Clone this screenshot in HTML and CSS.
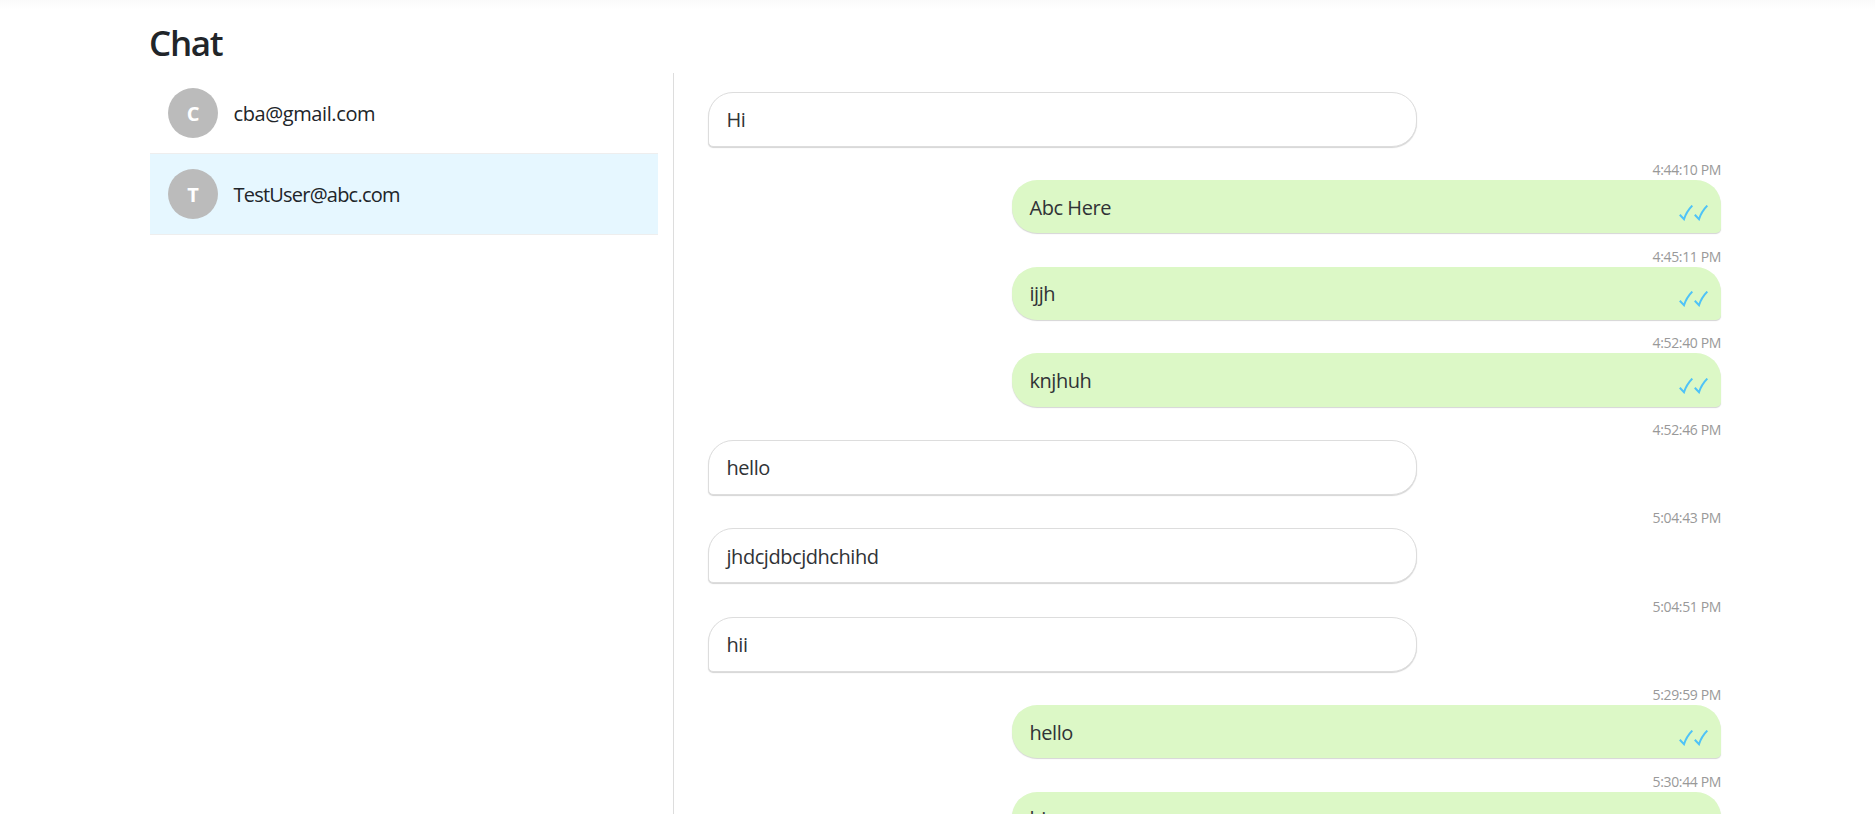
FILE: index.html
```html
<!DOCTYPE html>
<html lang="en">
<head>
<meta charset="utf-8">
<title>Chat</title>
<link rel="stylesheet" href="styles.css">
</head>
<body>
<svg class="defs" width="0" height="0"><symbol id="ticks" viewBox="0 0 30 16"><path d="M.8 9.800 5 14.200C6.500 9.500 9.500 4.500 13.300.6M15.800 9.800 20 14.200C21.500 9.500 24.500 4.500 28.300.6" fill="none" stroke="#4fc3f7" stroke-width="2"/></symbol></svg>
<div class="topbar"></div>
<main class="page">
  <h1 class="title">Chat</h1>
  <div class="columns">
    <aside class="users">
      <div class="user"><span class="avatar">C</span><span class="email">cba@gmail.com</span></div>
      <div class="user active"><span class="avatar">T</span><span class="email">TestUser@abc.com</span></div>
    </aside>
    <section class="messages">
      <div class="message"><div class="bubble">Hi</div><time class="time">4:44:10 PM</time></div>
      <div class="message sent"><div class="bubble"><span>Abc Here</span><svg class="ticks"><use href="#ticks"/></svg></div><time class="time">4:45:11 PM</time></div>
      <div class="message sent"><div class="bubble"><span>ijjh</span><svg class="ticks"><use href="#ticks"/></svg></div><time class="time">4:52:40 PM</time></div>
      <div class="message sent"><div class="bubble"><span>knjhuh</span><svg class="ticks"><use href="#ticks"/></svg></div><time class="time">4:52:46 PM</time></div>
      <div class="message"><div class="bubble">hello</div><time class="time">5:04:43 PM</time></div>
      <div class="message"><div class="bubble">jhdcjdbcjdhchihd</div><time class="time">5:04:51 PM</time></div>
      <div class="message"><div class="bubble">hii</div><time class="time">5:29:59 PM</time></div>
      <div class="message sent"><div class="bubble"><span>hello</span><svg class="ticks"><use href="#ticks"/></svg></div><time class="time">5:30:44 PM</time></div>
      <div class="message sent"><div class="bubble"><span>hi</span><svg class="ticks"><use href="#ticks"/></svg></div></div>
    </section>
  </div>
</main>
</body>
</html>
```
FILE: styles.css
```css
* { box-sizing: border-box; }
body {
  margin: 0;
  height: 814px;
  overflow: hidden;
  background: #fff;
  color: #212529;
  font: 20px/30px "Open Sans", "Noto Sans", sans-serif;
}
.defs { display: block; }
.topbar { height: 10px; background: linear-gradient(#fafafa, #fff); }
.page { width: 1575px; margin: 0 auto; padding-top: 13px; }
.title { margin: 0 0 10px -1px; font-size: 35px; line-height: 40px; font-weight: 600; letter-spacing: -1.3px; }
.columns { display: flex; height: 741px; overflow: hidden; }
.users { width: 508px; margin-right: 15px; }
.user {
  display: flex;
  align-items: center;
  height: 80px;
  padding: 0 18px;
}
.user.active { height: 82px; background: #e6f7ff; border: solid #eee; border-width: 1px 0; }
.avatar {
  width: 50px;
  height: 50px;
  margin-right: 15.500px;
  border-radius: 50%;
  background: #bbb;
  color: #fff;
  font-weight: 700;
  line-height: 52px;
  text-align: center;
}
.email { padding-top: 2px; letter-spacing: -0.400px; }
.active .email { letter-spacing: -0.780px; }
.messages {
  flex: 1;
  padding: 18.800px 4px 0 34px;
  border-left: 1px solid #ddd;
}
.message { display: flex; flex-direction: column; align-items: flex-start; }
.message.sent { align-items: flex-end; }
.bubble {
  display: flex;
  justify-content: space-between;
  width: 709px;
  height: 55px;
  padding: 12.500px 17.500px 0;
  border: 1px solid #ddd;
  border-radius: 25px 25px 25px 5px;
  background: #fff;
  box-shadow: 0 1px 1px rgba(0, 0, 0, .17);
  color: #303336;
  letter-spacing: -0.450px;
}
.sent .bubble {
  height: 53.200px;
  padding-right: 12px;
  border: 0;
  border-radius: 25px 25px 5px 25px;
  background: #dcf8c6;
}
.ticks { width: 30px; height: 16px; margin-top: 12px; }
.time {
  align-self: flex-end;
  margin-top: 12.400px;
  font-size: 14px;
  line-height: 21px;
  color: #999;
  letter-spacing: -0.360px;
}
```
